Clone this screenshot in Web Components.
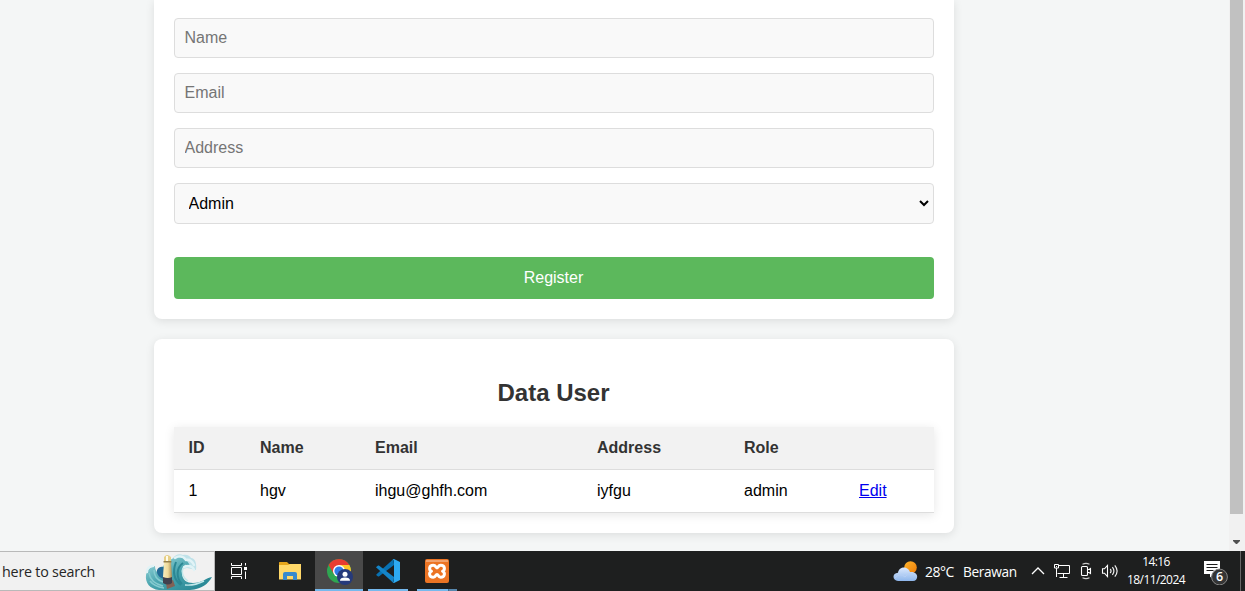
<!DOCTYPE html>
<html lang="id">
<head>
<meta charset="utf-8">
<title>Data User</title>
<style>
html,body{margin:0;height:100%;overflow:hidden}
body{font-family:"Liberation Sans",Arial,sans-serif;font-size:16px;color:#000}
</style>
</head>
<body>
<desk-screen>
  <browser-view slot="view">
    <form-card>
      <text-field label="Name"></text-field>
      <text-field label="Email"></text-field>
      <text-field label="Address"></text-field>
      <role-select></role-select>
      <submit-button>Register</submit-button>
    </form-card>
    <user-table></user-table>
  </browser-view>
  <task-bar slot="bar"></task-bar>
</desk-screen>
<script>
function define(name, html, init) {
  customElements.define(name, class extends HTMLElement {
    constructor() {
      super();
      const t = document.createElement('template');
      t.innerHTML = html;
      this.attachShadow({ mode: 'open' }).append(t.content.cloneNode(true));
    }
    connectedCallback() { if (init) init(this, this.shadowRoot); }
  });
}

define('desk-screen', `<style>
:host{display:flex;flex-direction:column;width:1245px;height:591px;overflow:hidden}
</style><slot name="view"></slot><slot name="bar"></slot>`);

define('scroll-bar', `<style>
:host{display:flex;flex-direction:column;width:16px;background:#f1f1f1;align-items:center}
.thumb{width:13px;height:514px;background:#c1c1c1;margin-right:1px}
svg{margin-top:26px;margin-right:1px}
</style><div class="thumb"></div><svg width="7" height="4" viewBox="0 0 7 4"><path d="M0 0h7v1L4 4H3L0 1z" fill="#505050"/></svg>`);

define('browser-view', `<style>
:host{display:flex;height:551px;background:#f4f6f6;overflow:hidden}
main{width:800px;margin-left:154px;margin-right:275px;display:flex;flex-direction:column;gap:20px}
</style><main><slot></slot></main><scroll-bar></scroll-bar>`);

define('form-card', `<style>
:host{display:flex;flex-direction:column;gap:15px;background:#fff;border-radius:0 0 8px 8px;box-sizing:border-box;height:319px;padding:18px 20px 20px;box-shadow:0 2px 10px rgba(0,0,0,.1)}
</style><slot></slot>`);

define('text-field', `<style>
:host{display:block;height:40px}
input{display:block;width:100%;height:40px;box-sizing:border-box;padding:10px 9.5px;border:1px solid #ddd;border-radius:4px;background:#f9f9f9;font:16px "Liberation Sans",Arial,sans-serif}
input::placeholder{color:#757575}
</style><input type="text">`, (el, root) => {
  root.querySelector('input').placeholder = el.getAttribute('label');
});

define('role-select', `<style>
:host{display:block;height:41px;border:1px solid #ddd;border-radius:4px;background:#f9f9f9;box-sizing:border-box}
select{display:block;width:757px;height:39px;box-sizing:border-box;padding:10px 10px 10px 9.5px;border:0;background:transparent;color:#000;font:16px "Liberation Sans",Arial,sans-serif}
</style><select><option>Admin</option></select>`);

define('submit-button', `<style>
:host{display:block;margin-top:18px}
button{display:block;width:100%;height:42px;border:0;border-radius:4px;background:#5cb85c;color:#fff;padding:0 7px 0 6px;font:16px "Liberation Sans",Arial,sans-serif}
</style><button type="button"><slot></slot></button>`);

define('user-table', `<style>
:host{display:block;box-sizing:border-box;height:194px;padding:20px;background:#fff;border-radius:8px;box-shadow:0 2px 10px rgba(0,0,0,.1)}
h2{margin:20px 1px 20px 0;text-align:center;font-size:24px;line-height:28px;color:#333}
table{width:760px;table-layout:fixed;border-collapse:collapse;box-shadow:0 2px 10px rgba(0,0,0,.1)}
th,td{height:42px;padding:0 0 0 15px;text-align:left;border-bottom:1px solid #ddd;line-height:18px}
th:first-child,td:first-child{padding-left:14.6px}
th{background:#f2f2f2;color:#333}
a{color:#0000ee}
</style><h2>Data User</h2>
<table><colgroup><col style="width:71px"><col style="width:115px"><col style="width:222px"><col style="width:147px"><col style="width:115px"><col></colgroup>
<tr><th>ID</th><th>Name</th><th>Email</th><th>Address</th><th>Role</th><th></th></tr>
<tr><td>1</td><td>hgv</td><td>ihgu@ghfh.com</td><td>iyfgu</td><td>admin</td><td><a href="#">Edit</a></td></tr></table>`);

define('search-box', `<style>
:host{display:flex;box-sizing:border-box;width:215px;height:40px;background:#f1f1f1;border:solid #b9b9b9;border-width:1px 1px 1px 0;align-items:center;padding-left:2px;font:14.3px/20px "Open Sans","Noto Sans",sans-serif;color:#262626}
span{width:143px;letter-spacing:-.21px;white-space:nowrap;padding-top:2px;box-sizing:border-box}
svg{flex:none}
</style><span>here to search</span>
<svg width="67" height="38" viewBox="0 0 67 38">
<defs><linearGradient id="w" x1="0" y1="0" x2="1" y2="1"><stop offset="0" stop-color="#a5dbe0"/><stop offset=".45" stop-color="#4ba6b0"/><stop offset="1" stop-color="#1f7f8d"/></linearGradient>
<linearGradient id="l"><stop offset="0" stop-color="#f8edbe"/><stop offset=".55" stop-color="#eeda9b"/><stop offset="1" stop-color="#a98c56"/></linearGradient></defs>
<path d="M27 7c3-4 7-6 11-4 4-1 7 1 8 3 4 0 6 5 5 12l-9-2-12 3z" fill="#bfe2e9"/>
<path d="M27 7c7-4 15-1 18 7-7-1-9 2-8 7 0 7 5 10 11 10 9 0 13-5 19-6-4 7-10 12-22 13H14C5 37 0 31 1 23c1-5 4-8 9-9 0 4 2 7 5 8 1-6 6-14 12-15z" fill="url(#w)"/>
<path d="M12 18c2-4 6-4 8-2v11c-4 0-9-4-8-9z" fill="#246b96"/>
<path d="M4 21c1 7 6 11 14 13m-9-16c0 6 3 10 9 12M5 29c3 4 8 6 14 7" fill="none" stroke="#86cbd0" stroke-width="1.600"/>
<path d="M31 10c-3 8-3 17 5 23m2-22c-7 5-7 15-1 21" fill="none" stroke="#2b8794" stroke-width="2"/>
<path d="M41 13c-6 5-4 12 2 16m-3 4c9 1 15-2 19-4" fill="none" stroke="#c2e8ea" stroke-width="1.400"/>
<path d="M2 20c0-4 3-6 6-6M30 6c5-3 9-1 11 2 4-1 6 1 8 5M39 15c4-2 9-1 10 3" fill="none" stroke="#e1f3f6" stroke-width="2.400" stroke-linecap="round"/>
<path d="M21 31l7-3 2 6-8 3z" fill="#826155"/>
<path d="M18 25h9v6q-4 3-9 0z" fill="#41414e"/>
<path d="M19 10h7l1 15q-4 2-9 0z" fill="url(#l)"/>
<path d="M19 5q3-4 7 0v5h-7z" fill="#e6cf87"/><path d="M18.500 9h8v1.500h-8z" fill="#94804e"/><path d="M21 4h2v5h-2z" fill="#fffbea"/>
</svg>`);

define('app-button', `<style>
:host{display:flex;flex-direction:column;box-sizing:border-box;height:40px;align-items:center}
.icon{height:38px;display:flex;align-items:center;justify-content:center}
.line{height:2px;width:100%;display:flex}
:host([open]) .line{background:#76b9ed}
:host([active]){background:#494949}
:host([stacked]) .line{background:linear-gradient(90deg,#76b9ed 31px,#416d92 31px,#416d92 32px,#5787ad 32px)}
</style><div class="icon"><slot></slot></div><div class="line"></div>`);

define('tray-area', `<style>
:host{display:flex;height:40px;align-items:center;color:#fff;font-family:"Open Sans","Noto Sans",sans-serif;white-space:nowrap}
svg{flex:none;display:block}
.weather{margin-right:6px}
.temp{font-size:14px;letter-spacing:-.5px;width:38px;line-height:20px;padding-top:2px}
.sky{font-size:13.700px;letter-spacing:-.380px;width:68px;line-height:20px;padding-top:2px}
.clock{width:66px;text-align:center;font-size:12px;line-height:18px;letter-spacing:-.58px;margin-left:4px}
.note{margin-left:14px;margin-top:2px}
.edge{width:1px;height:40px;background:#666;margin-left:11px}
</style>
<svg class="weather" width="26" height="22" viewBox="0 0 26 22"><defs><linearGradient id="c" x1="0" y1="0" x2="0" y2="1"><stop offset="0" stop-color="#dce9fd"/><stop offset="1" stop-color="#8fb7ec"/></linearGradient><linearGradient id="s" x1="0" y1="0" x2="1" y2="1"><stop offset="0" stop-color="#ffb52b"/><stop offset="1" stop-color="#ed7b08"/></linearGradient></defs><circle cx="17.500" cy="7.500" r="6.300" fill="url(#s)"/><path d="M5 21c-6-.5-6-8 0-8.300C6 6 15 5.500 17 12c9-1 9 8.500 3 9z" fill="url(#c)"/><path d="M2 18q5-6 10-1 5-7 11-1" fill="none" stroke="#b7d0f5" stroke-width="1"/></svg>
<div class="temp">28°C</div><div class="sky">Berawan</div>
<svg width="14" height="10" viewBox="0 0 14 10"><path d="M1 8l6-6 6 6" fill="none" stroke="#fff" stroke-width="1.300"/></svg>
<svg width="18" height="16" viewBox="0 0 18 16" style="margin-left:8px"><path d="M6 2.500h10.500v8H4.500M10.500 11v3M6.500 14.500h8M1.500 1.500h4v3.500h-4zM3.500 5v9" fill="none" stroke="#fff"/><path d="M3 3h1v1H3z" fill="#fff"/></svg>
<svg width="12" height="18" viewBox="0 0 12 18" style="margin-left:9px"><path d="M2.500 2.200q3.500-1.700 7 0M2.500 15.800q3.500 1.700 7 0" fill="none" stroke="#ccc" stroke-width="1.100"/><path d="M2.500 4.500h4q1 0 1 1v7q0 1-1 1h-4q-1 0-1-1v-7q0-1 1-1zM8 7.500h1l1.500-1v5l-1.500-1H8" fill="none" stroke="#fff" stroke-width="1.100"/></svg>
<svg width="18" height="16" viewBox="0 0 18 16" style="margin-left:9px"><path d="M1.500 5.800h2L6.500 2.500v11L3.500 10.200h-2z" fill="none" stroke="#fff" stroke-width="1.100"/><path d="M9.200 6q1.700 2 0 4M11.400 4.200q3 3.800 0 7.600M13.800 2.300q4.600 5.700 0 11.400" fill="none" stroke="#eee" stroke-width="1.200"/></svg>
<div class="clock"><div>14:16</div><div>18/11/2024</div></div>
<svg class="note" width="26" height="26" viewBox="0 0 26 26"><g transform="translate(0 1)"><path d="M1 1h16v13H11l-4 3.500V14H1z" fill="#fff"/><path d="M3.500 4.500h11M3.500 7.500h11M3.500 10.500h7" stroke="#1c1c1c"/><circle cx="16.500" cy="17" r="7.900" fill="#353535" stroke="#858585"/><text x="16.500" y="21.300" text-anchor="middle" font-family="Open Sans,sans-serif" font-size="12.500" font-weight="600" fill="#fff">6</text></g></svg>
<div class="edge"></div>`);

define('task-bar', `<style>
:host{display:flex;height:40px;background:#1e1f1f}
svg{display:block}
.space{flex:1}
</style>
<search-box></search-box>
<app-button style="width:48px"><svg width="18" height="18" viewBox="0 0 18 18" style="margin-top:1px"><path d="M1.500 1v2.500h10V1M1.500 17v-2.500h10V17M1.500 5.500h10v7h-10zM15.500 1v2.500M15.500 9.500V17" fill="none" stroke="#fff"/><path d="M14 5h3v3h-3z" fill="#fff"/></svg></app-button>
<app-button style="width:48px;margin:0 2px"><svg width="22" height="20" viewBox="0 0 22 20" style="margin-left:2px;margin-top:2px"><path d="M0 1.500q0-.5.500-.5H8l2 2h11.500q.5 0 .5.500V18H0z" fill="#e5a51b"/><path d="M0 4h9l2-1h11v15.500H0z" fill="#ffd869"/><path d="M4 19v-6q0-2 2-2h10q2 0 2 2v6h-4v-4H8v4z" fill="#3789cd"/></svg></app-button>
<app-button open active style="width:48px"><svg width="26" height="26" viewBox="0 0 26 26" style="margin-left:2px;margin-top:3px"><circle cx="12" cy="12" r="12" fill="#2fa651"/><path d="M1.610 6A12 12 0 0 1 22.390 6H12L6.800 15z" fill="#e83c31"/><path d="M22.390 6A12 12 0 0 1 12 24L17.200 15 12 6z" fill="#fdc727"/><circle cx="12" cy="12" r="6" fill="#fff"/><circle cx="12" cy="12" r="4.600" fill="#2f7be6"/><circle cx="18" cy="18" r="8" fill="#263a7b"/><circle cx="18" cy="15.200" r="2.500" fill="#fff"/><path d="M13 21.800q0-3.300 5-3.300t5 3.300z" fill="#fff"/></svg></app-button>
<app-button open style="width:40px;margin-left:5px"><svg width="24" height="24" viewBox="0 0 24 24" style="margin-top:2px"><path d="M17.500 0L.3 15.400q-.2.400.2.800l1.600 1.300q.4.200.8 0L18 6z" fill="#0871b2"/><path d="M17.500 24L.3 8.600q-.2-.4.200-.8l1.600-1.300q.4-.2.800 0L18 18z" fill="#1485c9"/><path d="M16.500.5L18 0l6 3v18l-6 3-1.500-.5q1.500 0 1.500-1.500V2Q18 .5 16.500.5z" fill="#2daaf2"/></svg></app-button>
<app-button open stacked style="width:40px;margin-left:9px"><svg width="24" height="24" viewBox="0 0 24 24" style="margin-top:2px"><rect width="24" height="24" rx="2" fill="#ec7424"/><path d="M1 1h22v2H1z" fill="#f2a26d"/><path d="M8.300 6.200c-4.500 0-4.500 4.600-2 6-2.500 1.400-2.500 6 2 6 2.700 0 2.200-2.700 3.700-2.700s1 2.700 3.700 2.700c4.500 0 4.500-4.600 2-6 2.500-1.400 2.500-6-2-6-2.700 0-2.200 2.700-3.700 2.700s-1-2.700-3.700-2.700z" fill="none" stroke="#fff" stroke-width="3"/><path d="M8.500 9.500v5.400M15.500 9.500v5.400" stroke="#ec7424" stroke-width="1.200"/></svg></app-button>
<div class="space"></div><tray-area></tray-area><div style="width:4px"></div>`);
</script>
</body>
</html>
